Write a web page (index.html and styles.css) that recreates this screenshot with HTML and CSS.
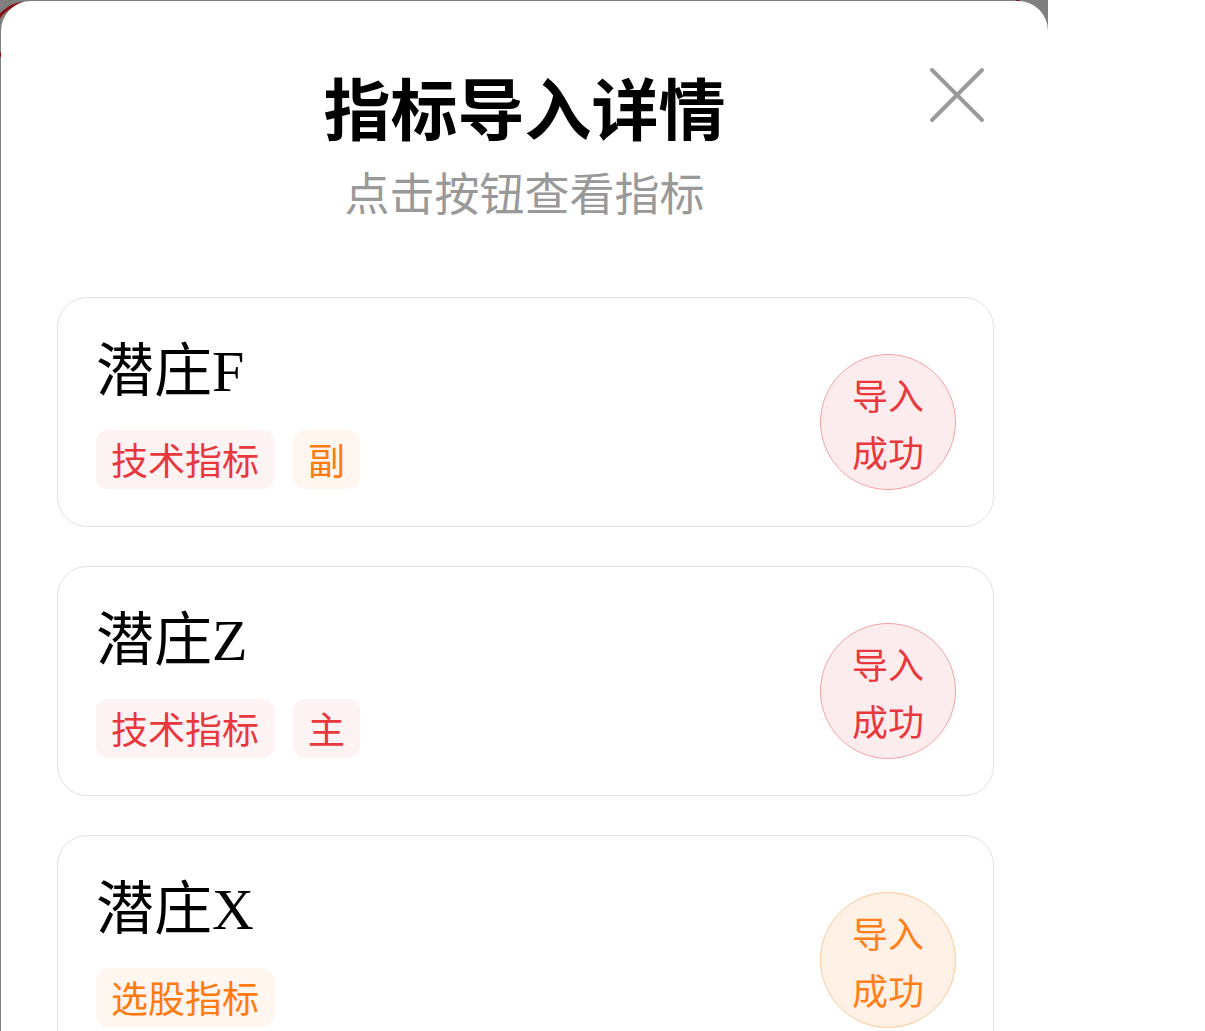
FILE: index.html
```html
<!DOCTYPE html>
<html>
<head>
  <meta charset="utf-8">
  <link rel="stylesheet" href="styles.css">
</head>
<body>
  <div class="stage">
    <div class="backdrop-shape shape-left"></div>
    <div class="backdrop-shape shape-right"></div>

    <div class="modal">
      <div class="modal-header">
        <h2 class="modal-title">指标导入详情</h2>
        <div class="modal-subtitle">点击按钮查看指标</div>
        <button class="close-btn" title="关闭">
          <svg width="60" height="60" viewBox="0 0 60 60">
            <path d="M5 5 L55 55 M55 5 L5 55" stroke="#9a9a9a" stroke-width="4" stroke-linecap="round" fill="none"/>
          </svg>
        </button>
      </div>

      <div class="indicator-list">
        <div class="indicator-card">
          <div class="indicator-info">
            <div class="indicator-name">潜庄F</div>
            <div class="indicator-tags">
              <span class="tag tag-red">技术指标</span>
              <span class="tag tag-orange">副</span>
            </div>
          </div>
          <div class="status-badge status-red">导入<br>成功</div>
        </div>

        <div class="indicator-card">
          <div class="indicator-info">
            <div class="indicator-name">潜庄Z</div>
            <div class="indicator-tags">
              <span class="tag tag-red">技术指标</span>
              <span class="tag tag-red">主</span>
            </div>
          </div>
          <div class="status-badge status-red">导入<br>成功</div>
        </div>

        <div class="indicator-card">
          <div class="indicator-info">
            <div class="indicator-name">潜庄X</div>
            <div class="indicator-tags">
              <span class="tag tag-orange">选股指标</span>
            </div>
          </div>
          <div class="status-badge status-orange">导入<br>成功</div>
        </div>
      </div>
    </div>
  </div>
</body>
</html>
```

FILE: styles.css
```css
body {
  margin: 0;
  background: #fff;
  font-family: 'Noto Sans CJK SC', 'Noto Sans', sans-serif;
  overflow: hidden;
}

.stage {
  position: relative;
  width: 1048px;
  height: 1031px;
  background: #7f7f7f;
  overflow: hidden;
}

/* page content peeking from behind the overlay */
.backdrop-shape {
  position: absolute;
  width: 60px;
  height: 60px;
  border-radius: 50%;
  border: 3px solid #8a1010;
}

.shape-left {
  left: -8px;
  top: 2px;
}

.shape-right {
  right: -40px;
  top: -20px;
  width: 70px;
  height: 70px;
}

.modal {
  position: relative;
  margin: 1px 0 0 1px;
  width: 1047px;
  height: 1030px;
  background: #fff;
  border-radius: 30px 30px 0 0;
}

.modal-header {
  position: relative;
  text-align: center;
  padding-top: 63px;
  height: 226px;
  box-sizing: border-box;
}

.modal-title {
  margin: 0;
  font-size: 67px;
  line-height: 84px;
  font-weight: 700;
  color: #000;
}

.modal-subtitle {
  font-size: 45px;
  line-height: 60px;
  color: #999;
  margin-top: 14px;
}

.close-btn {
  position: absolute;
  top: 64px;
  left: 926px;
  width: 60px;
  height: 60px;
  padding: 0;
  border: none;
  background: none;
  cursor: pointer;
}

.close-btn svg {
  display: block;
}

.indicator-list {
  display: flex;
  flex-direction: column;
  gap: 39px;
  padding: 70px 54px 0 56px;
}

.indicator-card {
  display: flex;
  align-items: center;
  justify-content: space-between;
  height: 230px;
  box-sizing: border-box;
  padding: 40px 37px 38px 38px;
  border: 1px solid #e2e2e2;
  border-radius: 30px;
}

.indicator-name {
  font-family: 'Liberation Serif', 'Noto Sans CJK SC', serif;
  font-size: 58px;
  line-height: 70px;
  color: #000;
}

.indicator-tags {
  display: flex;
  gap: 19px;
  margin-top: 23px;
}

.tag {
  display: inline-block;
  height: 59px;
  line-height: 59px;
  padding: 0 15px;
  font-size: 37px;
  border-radius: 12px;
}

.tag-red {
  color: #e8383d;
  background: #fdf3f3;
}

.tag-orange {
  color: #ff7a0f;
  background: #fff6ef;
}

.status-badge {
  width: 136px;
  height: 136px;
  box-sizing: border-box;
  padding-top: 2px;
  border-radius: 50%;
  margin-top: 18px;
  display: flex;
  align-items: center;
  justify-content: center;
  text-align: center;
  font-size: 36px;
  line-height: 57px;
}

.status-red {
  color: #e8383d;
  background: #fdeced;
  border: 1px solid #f2a2a5;
}

.status-orange {
  color: #ff7f1a;
  background: #fff1e6;
  border: 1px solid #fbc898;
}
```
